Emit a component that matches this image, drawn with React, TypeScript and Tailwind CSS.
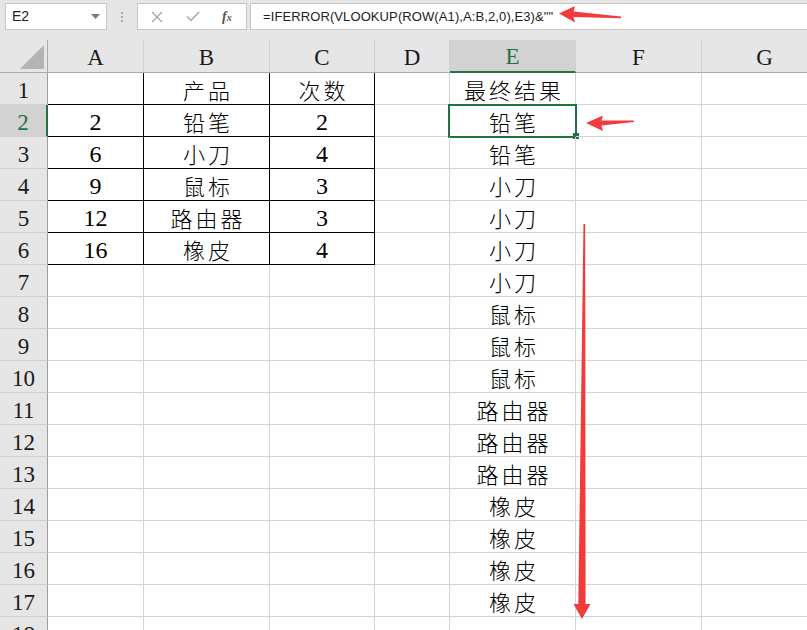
import React from "react";

const COLS = [
  { key: "A", w: "w-[96px]" },
  { key: "B", w: "w-[126px]" },
  { key: "C", w: "w-[105px]" },
  { key: "D", w: "w-[75px]" },
  { key: "E", w: "w-[126px]" },
  { key: "F", w: "w-[126px]" },
  { key: "G", w: "w-[126px]" },
];

type Row = { A?: string; B?: string; C?: string; E?: string };

const ROWS: Row[] = [
  { B: "产品", C: "次数", E: "最终结果" },
  { A: "2", B: "铅笔", C: "2", E: "铅笔" },
  { A: "6", B: "小刀", C: "4", E: "铅笔" },
  { A: "9", B: "鼠标", C: "3", E: "小刀" },
  { A: "12", B: "路由器", C: "3", E: "小刀" },
  { A: "16", B: "橡皮", C: "4", E: "小刀" },
  { E: "小刀" },
  { E: "鼠标" },
  { E: "鼠标" },
  { E: "鼠标" },
  { E: "路由器" },
  { E: "路由器" },
  { E: "路由器" },
  { E: "橡皮" },
  { E: "橡皮" },
  { E: "橡皮" },
  { E: "橡皮" },
  {},
];

function CellText({ v }: { v?: string }) {
  if (!v) return null;
  if (/^\d+$/.test(v)) {
    return (
      <span className="font-['Liberation_Serif',serif] text-[24px] leading-[32px] text-black pt-[3px]">
        {v}
      </span>
    );
  }
  return (
    <span className="font-['Noto_Sans_CJK_SC',sans-serif] font-light text-[22px] leading-[32px] tracking-[3px] pl-[3px] text-black pt-[1px]">
      {v}
    </span>
  );
}

export default function App() {
  return (
    <div className="relative w-[807px] h-[630px] overflow-hidden bg-white">
      {/* Formula bar */}
      <div className="h-[40px] bg-[#e6e6e6] flex items-start pt-[3px]">
        <div className="shrink-0 ml-[5px] w-[102px] h-[27px] bg-white border border-[#c6c6c6] flex items-center justify-between pl-[6px] pr-[6px]">
          <span className="font-['Liberation_Sans',sans-serif] text-[14px] text-[#222]">E2</span>
          <svg width="9" height="5" viewBox="0 0 9 5">
            <path d="M0 0 L9 0 L4.5 5 Z" fill="#7b7b7b" />
          </svg>
        </div>
        <div className="shrink-0 w-[30px] h-[27px] flex flex-col items-center justify-center gap-[2px]">
          <span className="block w-[2px] h-[2px] bg-[#a9a9a9]" />
          <span className="block w-[2px] h-[2px] bg-[#a9a9a9]" />
          <span className="block w-[2px] h-[2px] bg-[#a9a9a9]" />
        </div>
        <div className="shrink-0 w-[110px] h-[27px] bg-white border border-[#c6c6c6] flex items-center pl-[13px]">
          <svg width="12" height="12" viewBox="0 0 12 12">
            <path d="M1 1 L11 11 M11 1 L1 11" stroke="#a6a6a6" strokeWidth="1.3" />
          </svg>
          <svg className="ml-[23px]" width="14" height="11" viewBox="0 0 14 11">
            <path d="M1 5.5 L5 9.5 L13 1" stroke="#a6a6a6" strokeWidth="1.5" fill="none" />
          </svg>
          <span className="ml-[22px] font-['Liberation_Serif',serif] italic text-[14px] text-[#555] font-bold leading-none">
            f<span className="text-[10px]">x</span>
          </span>
        </div>
        <div className="ml-[3px] flex-1 h-[27px] bg-white border-y border-l border-[#c6c6c6] flex items-center pl-[12px]">
          <span className="font-['Liberation_Sans',sans-serif] text-[13px] text-[#222] tracking-[0.1px]">
            =IFERROR(VLOOKUP(ROW(A1),A:B,2,0),E3)&amp;""
          </span>
        </div>
      </div>

      {/* Column header */}
      <div className="flex h-[33px] bg-[#e6e6e6]">
        <div className="shrink-0 w-[48px] h-[33px] border-r border-b border-[#ababab] flex items-end justify-end pr-[3px] pb-[3px]">
          <svg width="24" height="24" viewBox="0 0 24 24">
            <path d="M24 0 L24 24 L0 24 Z" fill="#b4b4b4" />
          </svg>
        </div>
        {COLS.map((c) => {
          const sel = c.key === "E";
          return (
            <div
              key={c.key}
              className={
                c.w +
                " shrink-0 h-[33px] flex items-center justify-center border-r border-[#cfcfcf] " +
                (sel
                  ? "bg-[#d2d2d2] border-b-2 border-b-[#217346] text-[#217346]"
                  : "border-b border-b-[#ababab] text-[#1a1a1a]")
              }
            >
              <span className="font-['Liberation_Serif',serif] text-[23px] leading-none pt-[2px]">
                {c.key}
              </span>
            </div>
          );
        })}
      </div>

      {/* Rows */}
      {ROWS.map((r, i) => {
        const n = i + 1;
        const rowSel = n === 2;
        const inTable = n <= 6;
        return (
          <div key={n} className="flex h-[32px]">
            <div
              className={
                "w-[48px] shrink-0 h-[32px] flex items-center justify-center border-b border-b-[#cfcfcf] " +
                (rowSel
                  ? "bg-[#d2d2d2] border-r-2 border-r-[#217346] text-[#217346]"
                  : "bg-[#e6e6e6] border-r border-r-[#9e9e9e] text-[#1a1a1a]")
              }
            >
              <span className="font-['Liberation_Serif',serif] text-[23px] leading-none pt-[3px]">{n}</span>
            </div>
            {COLS.map((c) => {
              const black = inTable && (c.key === "A" || c.key === "B" || c.key === "C");
              const v = (r as Record<string, string | undefined>)[c.key];
              const selCell = n === 2 && c.key === "E";
              return (
                <div
                  key={c.key}
                  className={
                    c.w +
                    " relative shrink-0 h-[32px] flex items-center justify-center border-r border-b " +
                    (black ? "border-black" : "border-[#d4d4d4]")
                  }
                >
                  <CellText v={v} />
                  {selCell && (
                    <>
                      <div className="absolute left-[-2px] top-[-1px] w-[129px] h-[34px] border-2 border-[#217346]" />
                      <div className="absolute left-[123px] top-[28px] w-[6px] h-[6px] bg-[#217346]" />
                    </>
                  )}
                </div>
              );
            })}
          </div>
        );
      })}

      {/* Annotation arrows */}
      <svg
        className="absolute left-0 top-0 pointer-events-none"
        width="807"
        height="630"
        viewBox="0 0 807 630"
      >
        <polygon
          points="559,13.5 575,6 573.5,11.5 621,16.5 621,18.2 573.5,17 575,22.5"
          fill="#f23b3b"
        />
        <polygon
          points="586,123 603,115.5 601.5,120.5 634,120.5 634,122 601.5,125.5 603,131"
          fill="#f23b3b"
        />
        <polygon
          points="583.5,224 585.2,224 585.6,604 590.5,604 582,619 573.5,604 578.3,604"
          fill="#f23b3b"
        />
      </svg>
    </div>
  );
}
